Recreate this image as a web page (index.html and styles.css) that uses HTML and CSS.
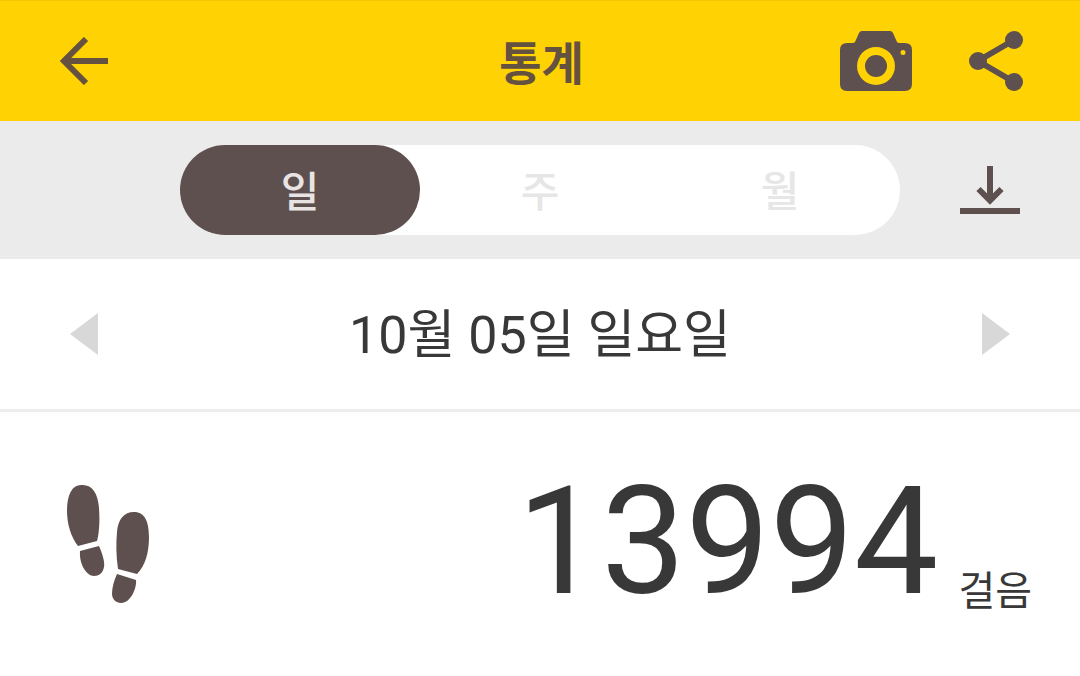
FILE: index.html
```html
<!DOCTYPE html>
<html lang="ko">
<head>
<meta charset="utf-8">
<meta name="viewport" content="width=device-width, initial-scale=1">
<title>통계</title>
<link rel="stylesheet" href="styles.css">
</head>
<body>
<header class="app-bar">
  <div class="app-bar-start">
    <button class="icon-button" type="button" aria-label="뒤로">
      <svg width="48" height="48" viewBox="0 0 48 48" fill="none" stroke="currentColor" stroke-width="6"><path d="M48 24H5M26 2L4 24l22 22"/></svg>
    </button>
  </div>
  <h1 class="title">통계</h1>
  <div class="app-bar-end">
    <button class="icon-button" type="button" aria-label="사진">
      <svg width="72" height="60" viewBox="0 0 72 60"><path fill="currentColor" fill-rule="evenodd" d="M22 0H50Q52 0 53 2L57 11Q58 12 59 12H65Q72 12 72 19V53Q72 60 65 60H7Q0 60 0 53V19Q0 12 7 12H13Q14 12 15 11L19 2Q20 0 22 0ZM36 16a19 19 0 1 0 0 38a19 19 0 1 0 0-38ZM63 19a2.500 2.500 0 1 0 0 5a2.500 2.500 0 1 0 0-5Z"/><circle cx="36" cy="35" r="11" fill="currentColor"/></svg>
    </button>
    <button class="icon-button" type="button" aria-label="공유">
      <svg width="54" height="60" viewBox="0 0 54 60" fill="currentColor"><path d="M45 9L9 30l36 21" fill="none" stroke="currentColor" stroke-width="6"/><circle cx="45" cy="9" r="9"/><circle cx="9" cy="30" r="9"/><circle cx="45" cy="51" r="9"/></svg>
    </button>
  </div>
</header>
<main>
  <div class="period-bar">
    <div class="tabs" role="tablist" aria-label="기간">
      <button class="tab tab-active" type="button" role="tab" aria-selected="true">일</button>
      <button class="tab" type="button" role="tab" aria-selected="false">주</button>
      <button class="tab" type="button" role="tab" aria-selected="false">월</button>
    </div>
    <button class="icon-button download" type="button" aria-label="다운로드">
      <svg width="60" height="48" viewBox="0 0 60 48" fill="none" stroke="currentColor" stroke-width="6"><path d="M30 0V35M18.500 23L30 34.500L41.500 23M0 45H60"/></svg>
    </button>
  </div>
  <div class="date-bar">
    <button class="icon-button arrow" type="button" aria-label="이전 날">
      <svg width="28" height="42" viewBox="0 0 28 42"><path d="M28 0V42L0 21Z" fill="currentColor"/></svg>
    </button>
    <h2 class="date">10월 05일 일요일</h2>
    <button class="icon-button arrow" type="button" aria-label="다음 날">
      <svg width="28" height="42" viewBox="0 0 28 42"><path d="M0 0V42L28 21Z" fill="currentColor"/></svg>
    </button>
  </div>
  <section class="steps">
    <svg class="footprints" width="84" height="120" viewBox="0 0 84 120" fill="currentColor" aria-hidden="true">
      <path d="M12 62C5 53 1 40 1 27C1 11 6 1 15 1C26 0 32 9 33 24C34 38 33 50 31 57Z"/>
      <path d="M14 67L33 62C37 71 39 79 38 83C37 89 33 92 28 92C21 92 13 81 14 67Z"/>
      <path d="M52 85C50 72 50 59 51 48C52 35 58 28 68 28C79 28 83 38 83 53C83 69 79 82 71 90Z"/>
      <path d="M51 90L70 96C71 103 65 119 55 119C50 119 46 115 46 110C46 103 48 97 51 90Z"/>
    </svg>
    <p class="count"><span class="count-value">13994</span><span class="count-unit">걸음</span></p>
  </section>
</main>
</body>
</html>
```
FILE: styles.css
```css
* {
  box-sizing: border-box;
}

body {
  margin: 0;
  background: #fff;
  color: #383838;
  font-family: Roboto, "Noto Sans CJK KR", sans-serif;
}

svg {
  display: block;
}

.icon-button {
  padding: 0;
  border: 0;
  background: none;
  color: #5e504f;
  cursor: pointer;
}

.app-bar {
  display: grid;
  grid-template-columns: 1fr auto 1fr;
  align-items: center;
  min-height: 121px;
  padding: 0 57px 0 60px;
  border-top: 1px solid #f3c804;
  background: #ffd204;
  color: #645140;
}

.app-bar-start .icon-button {
  display: block;
  color: #645140;
}

.app-bar-end {
  display: flex;
  justify-content: flex-end;
  gap: 57px;
}

.title {
  margin: 0;
  padding-top: 6px;
  font-size: 46px;
  line-height: 60px;
  font-weight: 700;
}

.period-bar {
  display: grid;
  grid-template-columns: 1fr 4fr 1fr;
  align-items: center;
  padding: 24px 0;
  background: #ebebeb;
}

.tabs {
  display: flex;
  grid-column: 2;
  border-radius: 45px;
  background: #fff;
}

.tab {
  flex: 1;
  height: 90px;
  padding: 6px 0 0;
  border: 0;
  border-radius: 45px;
  background: none;
  color: #e6e6e6;
  font: 500 42px/60px Roboto, "Noto Sans CJK KR", sans-serif;
  cursor: pointer;
}

.tab-active {
  background: #5e504f;
  color: #e8e4e3;
}

.download {
  justify-self: center;
}

.date-bar {
  display: flex;
  align-items: center;
  justify-content: space-between;
  height: 153px;
  padding: 0 70px;
  border-bottom: 3px solid #ededed;
}

.arrow {
  color: #d8d8d8;
}

.date {
  margin: 0;
  padding-top: 4px;
  font-size: 52px;
  line-height: 72px;
  font-weight: 400;
}

.steps {
  display: flex;
  align-items: center;
  justify-content: space-between;
  padding: 38px 48px 38px 66px;
}

.footprints {
  color: #5e504f;
}

.count {
  display: flex;
  align-items: flex-end;
  gap: 20px;
  margin: 0;
}

.count-value {
  padding-bottom: 4px;
  font-size: 150px;
  line-height: 184px;
}

.count-unit {
  padding-bottom: 16px;
  font-size: 40px;
  line-height: 60px;
}
```
